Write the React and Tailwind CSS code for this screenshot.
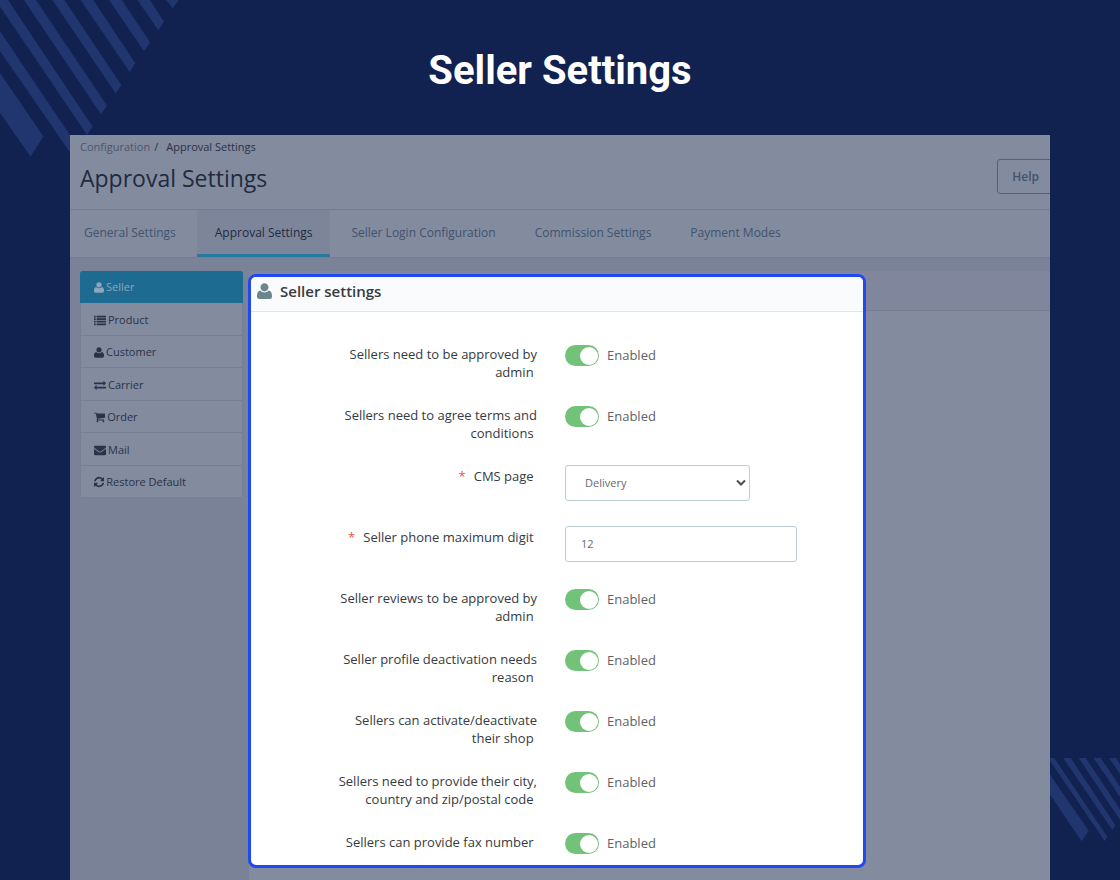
import React from "react";

const iconPaths = {
  user: "M7.5 0.2c2.3 0 4 1.8 4 4.1s-1.7 4.1-4 4.1-4-1.8-4-4.1 1.7-4.1 4-4.1zM3.2 7.5q1.7 1.9 4.3 1.9t4.3-1.9c2.3.5 3.2 2.7 3.2 5.4v.9q0 2.2-2.2 2.2h-10.6q-2.2 0-2.2-2.2v-.9c0-2.7.9-4.9 3.2-5.4z",
  list: "M0 256h256v256h-256zM384 256h1408v256h-1408zM0 640h256v256h-256zM384 640h1408v256h-1408zM0 1024h256v256h-256zM384 1024h1408v256h-1408zM0 1408h256v256h-256zM384 1408h1408v256h-1408z",
  exchange:
    "M1792 1184v192q0 13-9.5 22.5t-22.5 9.5h-1376v192q0 13-9.5 22.5t-22.5 9.5q-12 0-24-10l-319-320q-9-9-9-22 0-14 9-23l320-320q9-9 23-9 13 0 22.5 9.5t9.5 22.5v192h1376q13 0 22.5 9.5t9.5 22.5zm0-544q0 14-9 23l-320 320q-9 9-23 9-13 0-22.5-9.5t-9.5-22.5v-192h-1376q-13 0-22.5-9.5t-9.5-22.5v-192q0-13 9.5-22.5t22.5-9.5h1376v-192q0-14 9-23t23-9q12 0 24 10l319 319q9 9 9 23z",
  cart: "M704 1536q0 52-38 90t-90 38-90-38-38-90 38-90 90-38 90 38 38 90zm896 0q0 52-38 90t-90 38-90-38-38-90 38-90 90-38 90 38 38 90zm128-1088v512q0 24-16.5 42.5t-40.5 21.5l-1044 122q13 60 13 70 0 16-24 64h920q26 0 45 19t19 45-19 45-45 19h-1024q-26 0-45-19t-19-45q0-11 8-31.5t16-36 21.5-40 15.5-29.5l-177-823h-204q-26 0-45-19t-19-45 19-45 45-19h256q16 0 28.5 6.5t19.5 15.5 13 24.5 8 26 5.5 29.5 4.5 26h1201q26 0 45 19t19 45z",
  mail: "M1792 710v794q0 66-47 113t-113 47h-1472q-66 0-113-47t-47-113v-794q44 49 101 87 362 246 497 345 57 42 92.5 65.5t94.5 48 110 24.5h2q51 0 110-24.5t94.5-48 92.5-65.5q170-123 498-345 57-39 100-87zm0-294q0 79-49 151t-122 123q-376 261-468 325-10 7-42.5 31t-54 38.5-52 32.5-57.5 27-50 9h-2q-23 0-50-9t-57.5-27-52-32.5-54-38.5-42.5-31q-91-64-262-182.5t-205-142.5q-62-42-117-115.5t-55-136.5q0-78 41.5-130t118.5-52h1472q65 0 112.5 47t47.5 113z",
  refresh:
    "M1639 1056q0 5-1 7-64 268-268 434.5t-478 166.5q-146 0-282.5-55t-243.5-157l-129 129q-19 19-45 19t-45-19-19-45v-448q0-26 19-45t45-19h448q26 0 45 19t19 45-19 45l-137 137q71 66 161 102t187 36q134 0 250-65t186-179q11-17 53-117 8-23 30-23h192q13 0 22.5 9.5t9.5 22.5zm25-800v448q0 26-19 45t-45 19h-448q-26 0-45-19t-19-45 19-45l138-138q-148-137-349-137-134 0-250 65t-186 179q-11 17-53 117-8 23-30 23h-199q-13 0-22.5-9.5t-9.5-22.5v-7q65-268 270-434.5t480-166.5q146 0 284 55.5t245 156.5l130-129q19-19 45-19t45 19 19 45z",
};

// Each box is trimmed to the glyph's own width.
const iconBoxes = {
  user: "0 0 15 18",
  list: "0 0 1792 1792",
  exchange: "0 0 1792 1792",
  cart: "64 0 1664 1792",
  mail: "0 0 1792 1792",
  refresh: "128 0 1536 1792",
};

function Icon({ name, className }) {
  return (
    <svg viewBox={iconBoxes[name]} fill="currentColor" aria-hidden="true" className={className}>
      <path d={iconPaths[name]} />
    </svg>
  );
}

const tabs = [
  { label: "General Settings" },
  { label: "Approval Settings", active: true },
  { label: "Seller Login Configuration" },
  { label: "Commission Settings" },
  { label: "Payment Modes" },
];

const sections = [
  { label: "Seller", icon: "user", active: true },
  { label: "Product", icon: "list" },
  { label: "Customer", icon: "user" },
  { label: "Carrier", icon: "exchange" },
  { label: "Order", icon: "cart" },
  { label: "Mail", icon: "mail" },
  { label: "Restore Default", icon: "refresh" },
];

const fields = [
  { id: "approve", label: "Sellers need to be approved by admin" },
  { id: "terms", label: "Sellers need to agree terms and conditions" },
  { id: "cms", label: "CMS page", type: "select", required: true },
  { id: "phone", label: "Seller phone maximum digit", type: "text", required: true },
  { id: "reviews", label: "Seller reviews to be approved by admin" },
  { id: "deactivation", label: "Seller profile deactivation needs reason" },
  { id: "activate", label: "Sellers can activate/deactivate their shop" },
  { id: "address", label: "Sellers need to provide their city, country and zip/postal code" },
  { id: "fax", label: "Sellers can provide fax number" },
];

function Control({ field }) {
  if (field.type === "select") {
    return (
      <div className="relative w-[185px]">
        <select
          id={field.id}
          defaultValue="Delivery"
          className="h-9 w-full appearance-none rounded-[3px] border border-[#bbcdd2] bg-white pl-[19px] text-[11px] text-[#666b70]"
        >
          <option>Delivery</option>
          <option>Terms and conditions of use</option>
        </select>
        <svg
          viewBox="0 0 10 8"
          aria-hidden="true"
          className="pointer-events-none absolute top-[14px] right-1 h-2 w-[10px]"
        >
          <path d="M1 1.5 5 5.5 9 1.5" fill="none" stroke="#4b4f55" strokeWidth="2" />
        </svg>
      </div>
    );
  }
  if (field.type === "text") {
    return (
      <input
        id={field.id}
        type="text"
        defaultValue="12"
        className="h-9 w-[232px] rounded-[3px] border border-[#bbcdd2] bg-white px-[15px] pb-px text-[11px] text-[#666b70]"
      />
    );
  }
  return (
    <div className="flex h-[25px] items-center gap-2">
      <input
        id={field.id}
        type="checkbox"
        role="switch"
        defaultChecked
        className="flex h-[21px] w-[34px] appearance-none items-center justify-start rounded-full bg-[#b3c7cd] px-[2px] before:size-[18px] before:rounded-full before:bg-white checked:justify-end checked:bg-[#72c279] checked:px-px"
      />
      <span className="text-[13px] text-[#5f6368]">Enabled</span>
    </div>
  );
}

function Field({ field }) {
  return (
    <div className="flex h-[61px] items-start gap-7">
      <label
        htmlFor={field.id}
        className="w-[286px] pt-[2px] pl-[86px] text-right text-[13px] leading-[18px] text-[#363a41]"
      >
        {field.required && <span className="mr-2 text-[#f0553f]">*</span>}
        {field.label}
        {"\u00a0"}
      </label>
      <Control field={field} />
    </div>
  );
}

function Stripes({ shapes, className, viewBox }) {
  return (
    <svg viewBox={viewBox} fill="#21366e" aria-hidden="true" className={className}>
      {shapes.map((points) => (
        <polygon key={points} points={points} />
      ))}
    </svg>
  );
}

const topStripes = [
  "0,73 43.5,136.5 30.5,156.5 0,113",
  "0,31 78,147 72.5,156 0,51",
  "0,0 8,0 92.5,126.5 87,135 0,6.5",
  "24,0 36,0 107,105.7 101,114.3",
  "52.3,0 64.5,0 121.3,85 115.7,93.3",
  "80.7,0 93.3,0 135.3,63.3 129.7,72",
  "109,0 121.7,0 150,42.3 144,51",
  "137.3,0 150,0 164,21.7 158.3,30",
  "166,0 178.7,0 172.7,8.3",
];

const bottomStripes = [
  "0,16.5 38.7,72.7 31.7,83.3 0,36.5",
  "0,0 4.2,0 57.3,78.7 54.7,83 0,3",
  "13.3,0 20.7,0 65.5,67.5 62.3,72",
  "28.7,0 35.7,0 70,51.5 70,62",
  "43.7,0 50.7,0 70,28.5 70,39",
  "59,0 66,0 70,6 70,16",
];

export default function App() {
  return (
    <div className="relative flex min-h-screen flex-col overflow-hidden bg-[#112150] font-['Open_Sans',sans-serif]">
      <Stripes shapes={topStripes} viewBox="0 0 180 160" className="absolute top-0 left-0 h-[160px] w-[180px]" />
      <Stripes shapes={bottomStripes} viewBox="0 0 70 84" className="absolute top-[758px] right-0 h-[84px] w-[70px]" />

      <header className="flex h-[135px] items-center justify-center pt-[6px]">
        <h1 className="font-[Roboto,sans-serif] text-[40px] font-bold text-white">Seller Settings</h1>
      </header>

      <div className="relative mx-[70px] flex flex-1 flex-col overflow-hidden bg-[#7a8297]">
        <div className="flex h-[75px] items-start justify-between border-b border-[#747d92] bg-[#838b9e] pl-[10px]">
          <div>
            <nav aria-label="Breadcrumb" className="flex h-6 items-center text-[11px] text-[#273248]">
              <a href="#configuration" className="text-[#4c566b]">
                Configuration
              </a>
              <span className="mr-2 ml-1">/</span>
              <span>Approval Settings</span>
            </nav>
            <h2 className="text-[23px] leading-[38px] text-[#1f2b42]">Approval Settings</h2>
          </div>
          <button className="mt-6 -mr-1 h-[35px] rounded-[3px] border border-[#53617b] px-[14px] text-[12px] font-semibold text-[#41536f]">
            Help
          </button>
        </div>

        <nav aria-label="Settings" className="flex h-12 border-b border-[#747d92] bg-[#838b9e]">
          <div className="-ml-1 flex gap-[3px]">
            {tabs.map((tab) => (
              <a
                key={tab.label}
                href="#tab"
                className={
                  tab.active
                    ? "flex h-[47px] items-center border-b-3 border-[#267ba0] bg-[#7d859a] px-[18px] pt-px text-[12px] text-[#1f2b42]"
                    : "flex h-[47px] items-center border-b-3 border-transparent px-[18px] pt-px text-[12px] text-[#41536f]"
                }
              >
                {tab.label}
              </a>
            ))}
          </div>
        </nav>

        <div className="flex flex-1 gap-[5px] pt-[13px] pl-[10px]">
          <nav
            aria-label="Sections"
            className="grid h-[227px] w-[163px] shrink-0 auto-rows-fr overflow-hidden rounded-[3px] text-[11px]"
          >
            {sections.map((section) => (
              <a
                key={section.label}
                href="#section"
                className={
                  section.active
                    ? "flex items-center gap-[2px] bg-[#1d6b90] pt-px pl-[14px] text-[#8fa5ba]"
                    : "flex items-center gap-[2px] border-x border-b border-[#767f94] bg-[#838b9e] pt-[2px] pl-[13px] text-[#2a3349]"
                }
              >
                <Icon name={section.icon} className="h-3 w-auto" />
                {section.label}
              </a>
            ))}
          </nav>

          <div className="grid flex-1 grid-cols-1 grid-rows-1">
            <div className="col-start-1 row-start-1 ml-px bg-[#838b9e]">
              <div className="h-10 border-b border-[#747d92] bg-[#80879c]" />
            </div>
            <main className="relative col-start-1 row-start-1 mt-[3px] mb-[13px] w-[618px] self-start overflow-hidden rounded-lg border-3 border-[#2049f5] bg-white">
              <h3 className="flex h-[35px] items-center gap-2 border-b border-[#dfe6e9] bg-[#fafbfc] pb-[6px] pl-[6px] text-[15px] font-semibold text-[#363a41]">
                <Icon name="user" className="mt-[2px] h-[18px] w-auto text-[#6c868e]" />
                {"Seller settings"}
              </h3>
              <form className="-mb-[27px] pt-[31px]">
                {fields.map((field) => (
                  <Field key={field.id} field={field} />
                ))}
              </form>
            </main>
          </div>
        </div>
      </div>
    </div>
  );
}
